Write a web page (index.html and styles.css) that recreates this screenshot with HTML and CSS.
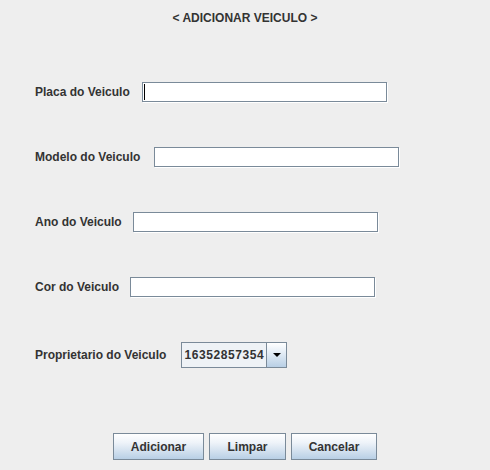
FILE: index.html
```html
<!DOCTYPE html>
<html lang="pt">
<head>
<meta charset="utf-8">
<title>Adicionar Veiculo</title>
<link rel="stylesheet" href="styles.css">
</head>
<body>
<div class="window">
  <div class="title">&lt; ADICIONAR VEICULO &gt;</div>
  <div class="form">
    <div class="row">
      <span class="label label-placa">Placa do Veiculo</span>
      <div class="field field-wide"><span class="caret"></span></div>
    </div>
    <div class="row">
      <span class="label label-modelo">Modelo do Veiculo</span>
      <div class="field field-wide"></div>
    </div>
    <div class="row">
      <span class="label label-ano">Ano do Veiculo</span>
      <div class="field field-wide"></div>
    </div>
    <div class="row">
      <span class="label label-cor">Cor do Veiculo</span>
      <div class="field field-wide"></div>
    </div>
    <div class="row row-combo">
      <span class="label label-prop">Proprietario do Veiculo</span>
      <div class="combo">
        <span class="combo-value">16352857354</span>
        <span class="combo-arrow"><svg width="10" height="6" viewBox="0 0 10 6"><path d="M1 1 H9 L5 5 Z" fill="#000"/></svg></span>
      </div>
    </div>
  </div>
  <div class="buttons">
    <button class="btn btn-add">Adicionar</button>
    <button class="btn btn-clear">Limpar</button>
    <button class="btn btn-cancel">Cancelar</button>
  </div>
</div>
</body>
</html>
```
FILE: styles.css
```css
html, body {
  margin: 0;
  padding: 0;
  background: #eeeeee;
}
.window {
  width: 490px;
  height: 470px;
  font-family: "Liberation Sans", Arial, sans-serif;
  font-size: 12px;
  font-weight: bold;
  color: #333333;
}
.title {
  padding-top: 11px;
  line-height: 15px;
  text-align: center;
}
.form {
  display: flex;
  flex-direction: column;
  gap: 45px;
  padding-left: 35px;
  margin-top: 56px;
}
.row {
  display: flex;
  align-items: center;
  height: 20px;
}
.row-combo {
  height: 26px;
}
.label {
  margin-right: 10px;
  line-height: 15px;
}
.label-placa { margin-right: 12px; }
.label-modelo { margin-right: 14px; }
.label-ano { margin-right: 11px; }
.label-cor { margin-right: 11px; }
.label-prop { margin-right: 15px; }
.field {
  box-sizing: border-box;
  width: 244px;
  height: 20px;
  background: #ffffff;
  border: 1px solid #7a8a99;
  box-shadow: 1px 1px 0 #ffffff;
  display: flex;
  align-items: center;
}
.field-wide {
  width: 245px;
}
.caret {
  display: block;
  width: 1px;
  height: 16px;
  margin-left: 1px;
  background: #000000;
}
.combo {
  box-sizing: border-box;
  height: 26px;
  width: 106px;
  display: flex;
  border: 1px solid #7a8a99;
  background: #eef2f6;
}
.combo-value {
  flex: 1;
  display: flex;
  align-items: center;
  padding-left: 2px;
  letter-spacing: 0.6px;
  color: #333333;
}
.combo-arrow {
  width: 19px;
  border-left: 1px solid #7a8a99;
  display: flex;
  align-items: center;
  justify-content: center;
  background: linear-gradient(#ffffff 0%, #e4edf6 40%, #b8cfe5 100%);
}
.buttons {
  display: flex;
  justify-content: center;
  gap: 5px;
  margin-top: 65px;
}
.btn {
  box-sizing: border-box;
  height: 27px;
  padding: 0;
  margin: 0;
  font: inherit;
  color: #333333;
  border: 1px solid #7a8a99;
  background: linear-gradient(#ffffff 0%, #eef3f9 35%, #b8cfe5 100%);
}
.btn-add { width: 91px; }
.btn-clear { width: 77px; }
.btn-cancel { width: 86px; }
```
